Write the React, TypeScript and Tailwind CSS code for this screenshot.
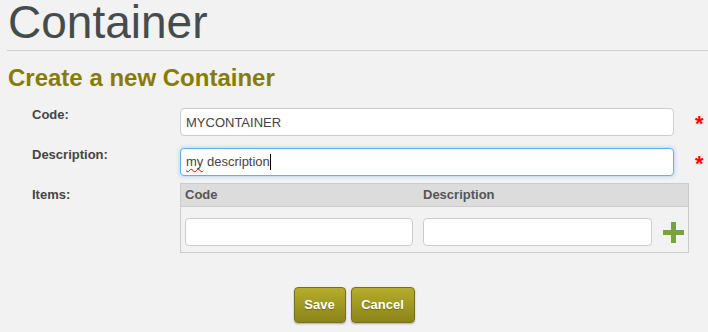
export default function App() {
  return (
    <div className="w-[708px] h-[332px] overflow-hidden bg-[#f2f2f2] text-[#444] font-['Liberation_Sans',Arial,sans-serif]">
      <div className="ml-[7px] pb-[5px] border-b border-[#cfcfcf]">
        <h1 className="pl-px text-[46px] leading-[45px] text-[#454c4c] font-normal">Container</h1>
      </div>
      <h2 className="mt-[13px] ml-[8px] text-[24px] leading-[28px] font-bold text-[#877c00]">Create a new Container</h2>

      <form className="mt-[16px] flex flex-col">
        <div className="flex items-start">
          <label className="w-[180px] pl-[32px] text-[13px] leading-[13px] font-bold text-[#444]">Code:</label>
          <input
            readOnly
            value="MYCONTAINER"
            className="w-[494px] h-[28px] px-[5px] bg-white border border-[#ccc] rounded-[4px] text-[13px] text-[#444] outline-none"
          />
          <span className="ml-[21px] mt-[5px] text-[22px] leading-[22px] font-bold text-[#f00]">*</span>
        </div>

        <div className="flex items-start mt-[12px]">
          <label className="w-[180px] pl-[32px] text-[13px] leading-[13px] font-bold text-[#444]">Description:</label>
          <div className="w-[494px] h-[28px] px-[5px] flex items-center bg-white border border-[#66afe9] rounded-[4px] shadow-[0_0_4px_rgba(102,175,233,0.6)] text-[13px] text-[#444]">
            <span className="underline decoration-wavy decoration-[#e00] decoration-1 underline-offset-2">my</span>
            <span className="whitespace-pre"> description</span>
            <span className="w-px h-[16px] bg-black" />
          </div>
          <span className="ml-[21px] mt-[5px] text-[22px] leading-[22px] font-bold text-[#f00]">*</span>
        </div>

        <div className="flex items-start mt-[7px]">
          <label className="w-[180px] pl-[32px] text-[13px] leading-[24px] font-bold text-[#444]">Items:</label>
          <div className="w-[509px]">
            <div className="flex h-[24px] items-center bg-[#dcdcdc] border border-[#ccc] text-[13px] font-bold text-[#555]">
              <span className="w-[238px] pl-[4px]">Code</span>
              <span className="pl-[4px]">Description</span>
            </div>
            <div className="flex items-start gap-[10px] pl-[4px] pt-[11px] pb-[6px] border-x border-b border-[#ccc]">
              <input readOnly className="w-[228px] h-[28px] bg-white border border-[#ccc] rounded-[4px]" />
              <input readOnly className="w-[229px] h-[28px] bg-white border border-[#ccc] rounded-[4px]" />
              <svg width="21" height="21" viewBox="0 0 21 21" className="mt-[4px] ml-[1px]">
                <rect x="8" y="0" width="5" height="21" fill="#7aa23a" />
                <rect x="0" y="8" width="21" height="5" fill="#7aa23a" />
              </svg>
            </div>
          </div>
        </div>

        <div className="mt-[34px] flex justify-center gap-[5px]">
          <button
            type="button"
            className="w-[52px] h-[36px] rounded-[4px] border border-[#76701a] bg-gradient-to-b from-[#b6ad2c] to-[#8b8418] text-white text-[13px] font-bold shadow-[0_1px_2px_rgba(0,0,0,0.3)] [text-shadow:0_1px_1px_rgba(0,0,0,0.3)]"
          >
            Save
          </button>
          <button
            type="button"
            className="w-[64px] h-[36px] rounded-[4px] border border-[#76701a] bg-gradient-to-b from-[#b6ad2c] to-[#8b8418] text-white text-[13px] font-bold shadow-[0_1px_2px_rgba(0,0,0,0.3)] [text-shadow:0_1px_1px_rgba(0,0,0,0.3)]"
          >
            Cancel
          </button>
        </div>
      </form>
    </div>
  )
}
